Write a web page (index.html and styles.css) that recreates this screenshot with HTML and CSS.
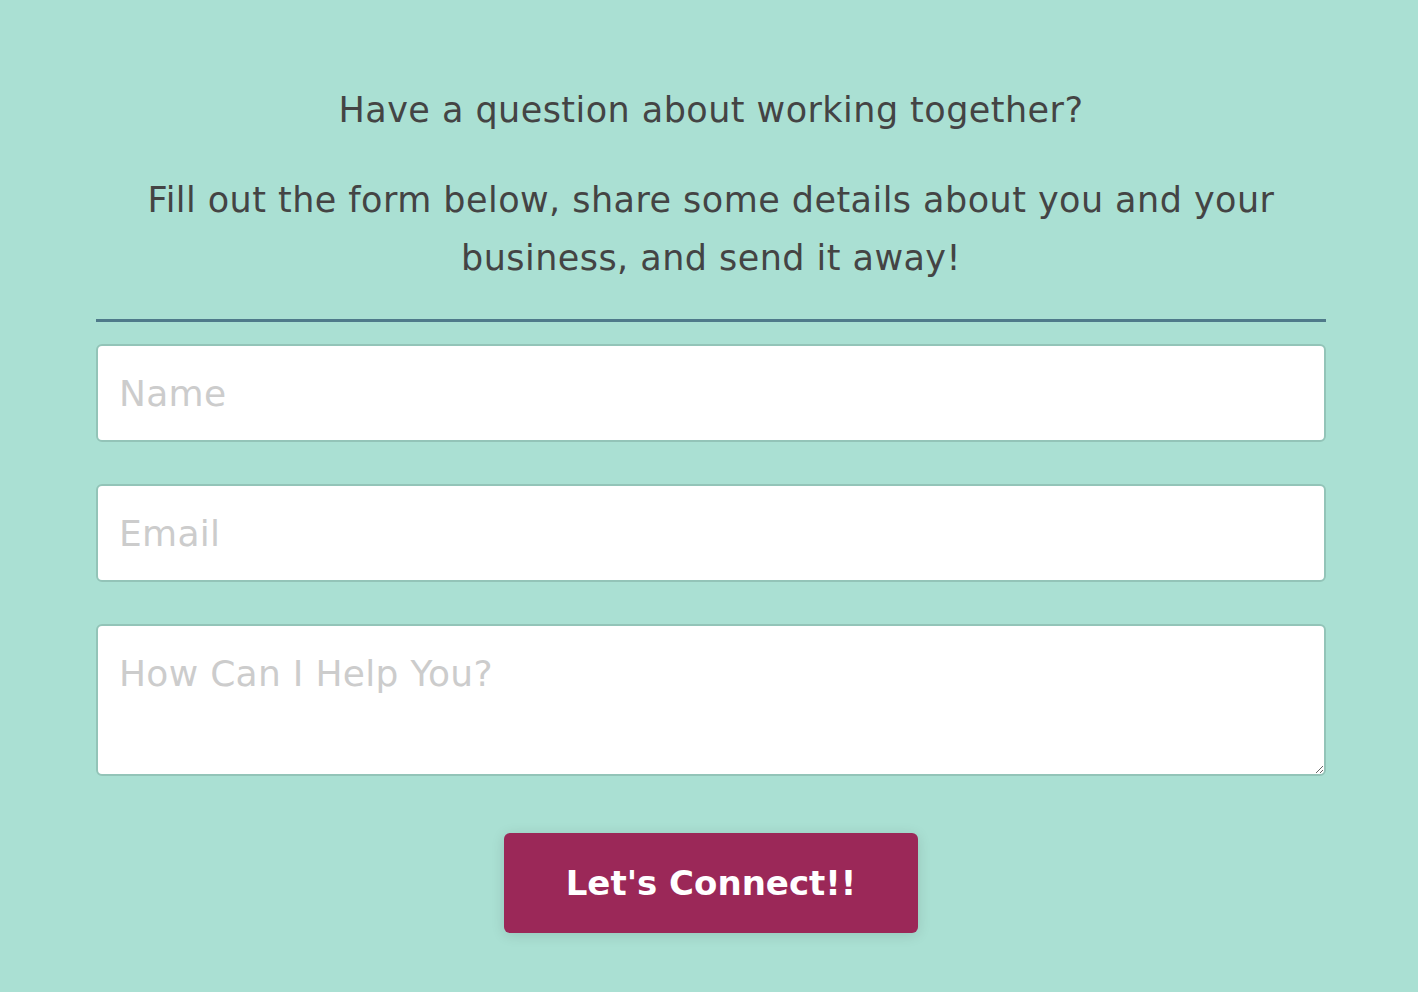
FILE: index.html
```html
<!DOCTYPE html>
<html lang="en">
<head>
<meta charset="utf-8">
<title>Contact</title>
<link rel="stylesheet" href="styles.css">
</head>
<body>
<main class="contact">
  <p class="intro">Have a question about working together?</p>
  <p class="intro">Fill out the form below, share some details about you and your business, and send it away!</p>
  <hr class="divider">
  <form class="form">
    <input class="field" type="text" placeholder="Name">
    <input class="field" type="email" placeholder="Email">
    <textarea class="field area" placeholder="How Can I Help You?"></textarea>
    <div class="actions">
      <button class="btn" type="button">Let's Connect!!</button>
    </div>
  </form>
</main>
</body>
</html>
```
FILE: styles.css
```css
html, body {
  margin: 0;
  padding: 0;
  background: #aae0d3;
}
body {
  font-family: "DejaVu Sans", "Noto Sans", sans-serif;
  color: #444444;
  height: 992px;
}
.contact {
  width: 1230px;
  margin: 0 0 0 96px;
  padding-top: 81px;
}
.intro {
  margin: 0 0 32px;
  font-size: 35px;
  letter-spacing: 0.45px;
  line-height: 58px;
  text-align: center;
  padding: 0 30px;
}
.divider {
  border: 0;
  height: 3px;
  background: #4f7a8a;
  margin: 0 0 22px;
}
.form {
  display: flex;
  flex-direction: column;
  gap: 42px;
}
.field {
  box-sizing: border-box;
  width: 100%;
  height: 98px;
  border: 2px solid #93c4b8;
  border-radius: 6px;
  background: #ffffff;
  padding: 0 21px;
  font-family: inherit;
  font-size: 36px;
  letter-spacing: 0.3px;
  color: #444;
  outline: none;
}
.field::placeholder {
  color: #cccccc;
}
.area {
  height: 152px;
  padding-top: 27px;
  resize: vertical;
  display: block;
}
.actions {
  display: flex;
  justify-content: center;
  margin-top: 15px;
}
.btn {
  width: 414px;
  height: 100px;
  background: #9b2858;
  color: #ffffff;
  border: 0;
  border-radius: 6px;
  font-family: inherit;
  font-weight: bold;
  font-size: 34px;
  box-shadow: 0 2px 14px rgba(0, 0, 0, 0.12);
  cursor: pointer;
}
```
